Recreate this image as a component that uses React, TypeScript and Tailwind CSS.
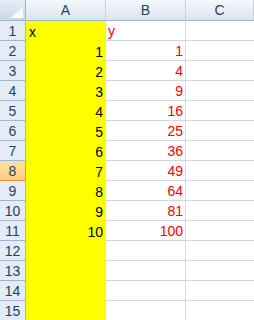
import React from 'react';

const ROWS: { a: string; b: string; left?: boolean }[] = [
    { a: 'x', b: 'y', left: true },
    { a: '1', b: '1' },
    { a: '2', b: '4' },
    { a: '3', b: '9' },
    { a: '4', b: '16' },
    { a: '5', b: '25' },
    { a: '6', b: '36' },
    { a: '7', b: '49' },
    { a: '8', b: '64' },
    { a: '9', b: '81' },
    { a: '10', b: '100' },
    { a: '', b: '' },
    { a: '', b: '' },
    { a: '', b: '' },
    { a: '', b: '' },
];

const SELECTED_ROW = 8;

export default function App() {
    return (
        <div className="w-[254px] h-[320px] overflow-hidden bg-white font-['Liberation_Sans',Arial,sans-serif] text-[14px] leading-none">
            <div className="grid grid-cols-[26px_80px_80px_1fr] auto-rows-[20px] grid-rows-[21px]">
                {/* Corner */}
                <div className="relative border-r border-b border-[#9eb6ce] bg-gradient-to-b from-[#e6edf7] to-[#c9d7ea]">
                    <svg className="absolute left-0 top-0" width="25" height="20" viewBox="0 0 25 20">
                        <defs>
                            <linearGradient id="tri" x1="0" y1="0" x2="1" y2="1">
                                <stop offset="0" stopColor="#eef2f8" />
                                <stop offset="1" stopColor="#ffffff" />
                            </linearGradient>
                        </defs>
                        <polygon points="23,7 23,18 10,18" fill="url(#tri)" />
                    </svg>
                </div>
                {['A', 'B', 'C'].map(col => (
                    <div
                        key={col}
                        className="flex items-center justify-center border-r border-b border-[#9eb6ce] border-r-[#c5d2e3] bg-gradient-to-b from-[#f5f8fc] via-[#e9eef6] to-[#dbe4f0] text-[#27415f]"
                    >
                        {col}
                    </div>
                ))}

                {ROWS.map((r, i) => {
                    const n = i + 1;
                    const sel = n === SELECTED_ROW;
                    return (
                        <React.Fragment key={n}>
                            <div
                                className={`flex items-center justify-center border-r border-b ${sel ? 'bg-gradient-to-b from-[#ffe2a8] to-[#fdcd7e] border-[#f29436] text-[#27415f]' : 'bg-[#e4ecf7] border-[#9eb6ce] text-[#27415f]'}`}
                            >
                                {n}
                            </div>
                            <div
                                className={`flex items-center bg-[#ffff00] px-[3px] pt-[1px] text-black ${r.left ? 'justify-start' : 'justify-end'}`}
                            >
                                {r.a}
                            </div>
                            <div
                                className={`flex items-center border-r border-b border-[#d0d7e5] px-[2px] pt-[1px] text-[#ff0000] ${r.left ? 'justify-start' : 'justify-end'}`}
                            >
                                {r.b}
                            </div>
                            <div className="border-b border-[#d0d7e5]" />
                        </React.Fragment>
                    );
                })}
            </div>
        </div>
    );
}
